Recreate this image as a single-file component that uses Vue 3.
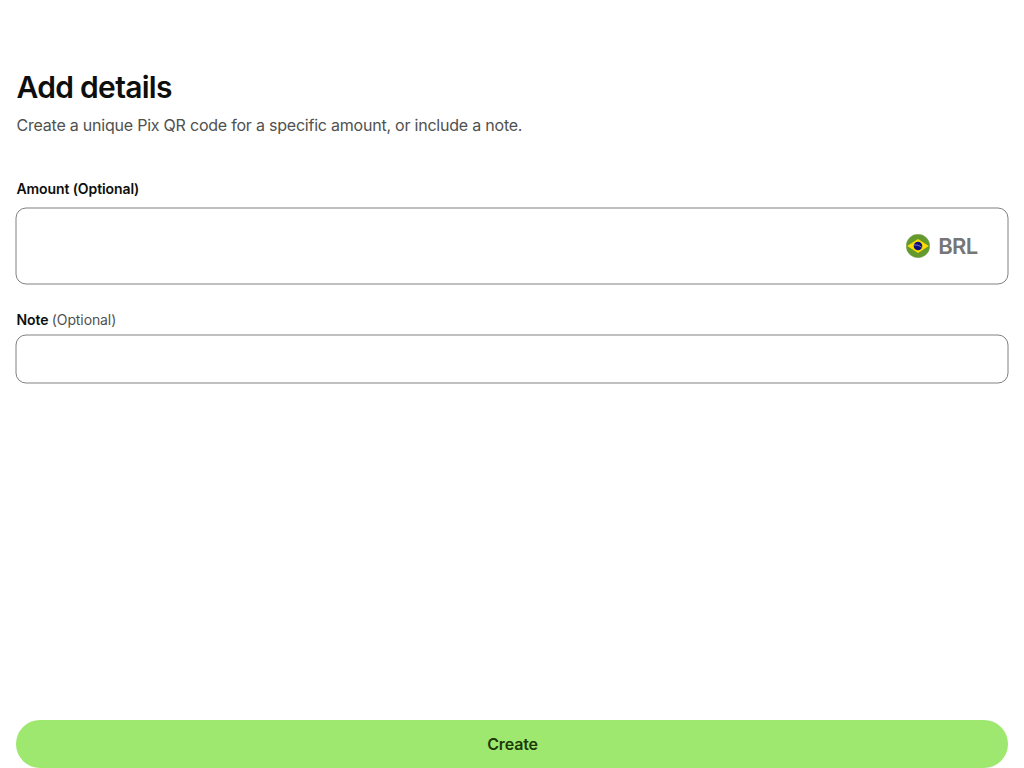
<script setup>
</script>

<template>
  <main class="page">
    <h1>Add details</h1>
    <p class="lead">Create a unique Pix QR code for a specific amount, or include a note.</p>
    <label class="label amount-label">Amount (Optional)</label>
    <div class="field amount">
      <svg class="outline"><rect width="100%" height="100%" rx="10" /></svg>
      <svg class="flag" viewBox="0 0 24 24">
        <circle cx="12" cy="12" r="11.8" fill="#64992c" stroke="#7f9d66" stroke-width=".4" />
        <path d="M12 4.9 22.8 12 12 19.1 1.2 12Z" fill="#fddc04" />
        <circle cx="12" cy="12" r="4.3" fill="#10107c" />
        <path d="M8 11c3-.3 5.8.6 7.8 2.4" fill="none" stroke="#c5c9e2" stroke-width=".6" />
      </svg>
      <span class="currency">BRL</span>
    </div>
    <label class="label note-label">Note <span>(Optional)</span></label>
    <div class="field note">
      <svg class="outline"><rect width="100%" height="100%" rx="10" /></svg>
    </div>
    <button class="create">Create</button>
  </main>
</template>

<style>
body { background: #fff; }
</style>

<style scoped>
.page {
  box-sizing: border-box;
  height: 768px;
  padding: 69px 16px 0;
  display: flex;
  flex-direction: column;
  font-family: Inter, sans-serif;
  color: #0e0f0c;
}
h1, .lead, .label { padding-left: 0.5px; }
h1 { margin: 0; font-size: 30px; line-height: 36px; font-weight: 600; letter-spacing: -0.7px; }
.lead { margin: 8px 0 0; font-size: 16px; line-height: 24px; color: #4f514f; letter-spacing: -0.22px; }
.label { font-size: 14px; line-height: 22px; font-weight: 600; letter-spacing: -0.1px; }
.amount-label { margin-top: 41px; }
.note-label { margin-top: 25px; }
.note-label span { font-weight: 400; color: #4f514f; }
.field { position: relative; }
.outline {
  position: absolute;
  inset: 0;
  width: 100%;
  height: 100%;
  overflow: visible;
  fill: none;
  stroke: #808080;
}
.amount {
  height: 76px;
  margin-top: 8px;
  padding-right: 30.5px;
  display: flex;
  align-items: center;
  justify-content: flex-end;
  gap: 8.5px;
}
.flag { width: 24px; height: 24px; }
.currency { font-size: 22px; line-height: 28px; font-weight: 600; color: #757675; letter-spacing: -0.7px; }
.note { height: 48px; margin-top: 4px; }
.create {
  height: 48px;
  margin-top: auto;
  padding: 0 0 0 1px;
  border: 0;
  border-radius: 24px;
  background: #9fe870;
  color: #1c3a06;
  font: 600 16px/24px Inter, sans-serif;
  letter-spacing: -0.15px;
}
</style>
